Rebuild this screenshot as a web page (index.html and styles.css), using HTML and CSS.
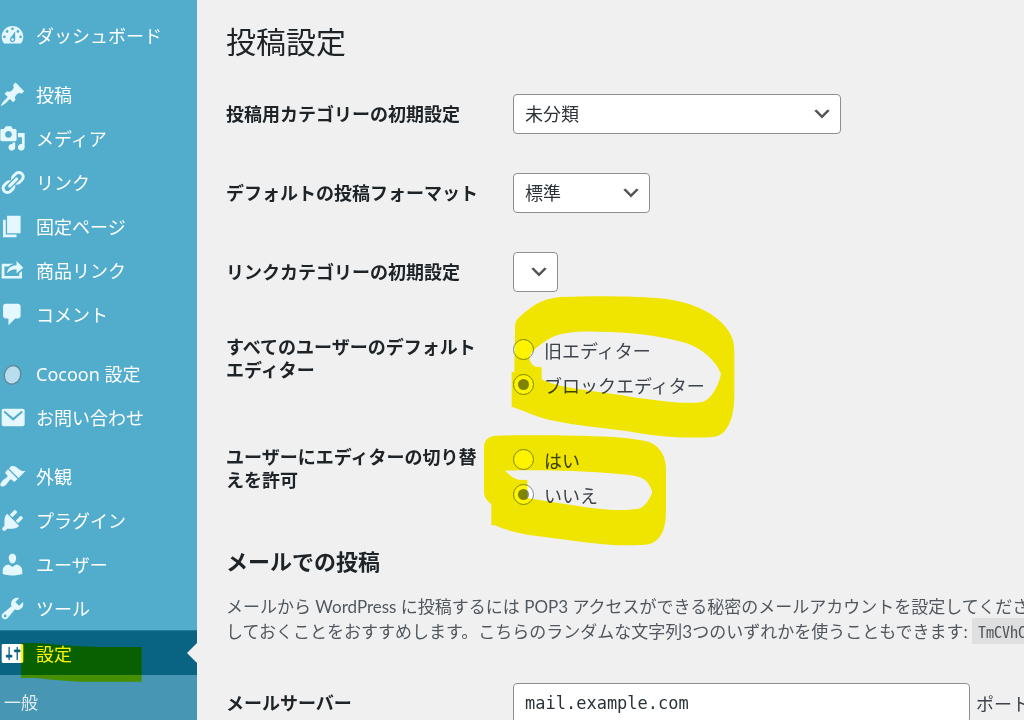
FILE: index.html
```html
<!DOCTYPE html>
<html lang="ja">

<head>
    <meta charset="utf-8">
    <title>投稿設定</title>
    <meta name="viewport" content="width=device-width, initial-scale=1">
    <link rel="stylesheet" href="styles.css">
</head>

<body>
    <nav class="sidebar">
        <ul class="menu">
            <li class="menu-item">
                <a href="#">
                    <svg class="icon" viewBox="0 0 20 20"><path d="M3.76 16h12.48c1.1-1.37 1.76-3.11 1.76-5 0-4.42-3.58-8-8-8s-8 3.58-8 8c0 1.89.66 3.63 1.76 5zM10 4c.55 0 1 .45 1 1s-.45 1-1 1-1-.45-1-1 .45-1 1-1zM6 6c.55 0 1 .45 1 1s-.45 1-1 1-1-.45-1-1 .45-1 1-1zm8 0c.55 0 1 .45 1 1s-.45 1-1 1-1-.45-1-1 .45-1 1-1zm-5.37 5.55L12 7v6c0 1.1-.9 2-2 2s-2-.9-2-2c0-.57.24-1.08.63-1.45zM4 10c.55 0 1 .45 1 1s-.45 1-1 1-1-.45-1-1 .45-1 1-1zm12 0c.55 0 1 .45 1 1s-.45 1-1 1-1-.45-1-1 .45-1 1-1zm-5 3c0-.55-.45-1-1-1s-1 .45-1 1 .45 1 1 1 1-.45 1-1z"/></svg>
                    ダッシュボード
                </a>
            </li>
            <li class="menu-item group-start">
                <a href="#">
                    <svg class="icon" viewBox="0 0 20 20"><path d="M10.44 3.02l1.82-1.82 6.36 6.35-1.83 1.82c-1.05-.68-2.48-.57-3.41.36l-.75.75c-.92.93-1.04 2.35-.35 3.41l-1.83 1.82-2.41-2.41-2.8 2.79c-.42.42-3.38 2.71-3.8 2.29s1.86-3.39 2.28-3.81l2.79-2.79L4.1 9.36l1.83-1.82c1.05.69 2.48.57 3.4-.36l.75-.75c.93-.92 1.05-2.35.36-3.41z"/></svg>
                    投稿
                </a>
            </li>
            <li class="menu-item">
                <a href="#">
                    <svg class="icon" viewBox="0 0 20 20"><path d="M13 11V4c0-.55-.45-1-1-1h-1.67L9 1H5L3.67 3H2c-.55 0-1 .45-1 1v7c0 .55.45 1 1 1h10c.55 0 1-.45 1-1zM7 4.5c1.38 0 2.5 1.12 2.5 2.5S8.38 9.5 7 9.5 4.5 8.38 4.5 7 5.62 4.5 7 4.5zM14 6h5v10.5c0 1.38-1.12 2.5-2.5 2.5S14 17.88 14 16.5s1.12-2.5 2.5-2.5c.17 0 .34.02.5.05V9h-3V6zm-4 8.05V13h2v3.5c0 1.38-1.12 2.5-2.5 2.5S7 17.88 7 16.5 8.12 14 9.5 14c.17 0 .34.02.5.05z"/></svg>
                    メディア
                </a>
            </li>
            <li class="menu-item">
                <a href="#">
                    <svg class="icon" viewBox="0 0 20 20"><path d="M17.74 2.76c1.68 1.69 1.68 4.41 0 6.1l-1.53 1.52c-1.12 1.12-2.7 1.47-4.14 1.09l2.62-2.61.76-.77.76-.76c.84-.84.84-2.2 0-3.04-.84-.85-2.2-.85-3.04 0l-.77.76-3.38 3.38c-.37-1.44-.02-3.02 1.1-4.14l1.52-1.53c1.69-1.68 4.42-1.68 6.1 0zM8.59 13.43l5.34-5.34c.42-.42.42-1.1 0-1.52-.44-.43-1.13-.39-1.53 0l-5.33 5.34c-.42.42-.42 1.1 0 1.52.44.43 1.13.39 1.52 0zm-.76 2.29l4.14-4.15c.38 1.44.03 3.02-1.09 4.14l-1.52 1.53c-1.69 1.68-4.41 1.68-6.1 0-1.68-1.68-1.68-4.42 0-6.1l1.53-1.52c1.12-1.12 2.7-1.47 4.14-1.1l-4.14 4.15c-.85.84-.85 2.2 0 3.05.84.84 2.2.84 3.04 0z"/></svg>
                    リンク
                </a>
            </li>
            <li class="menu-item">
                <a href="#">
                    <svg class="icon" viewBox="0 0 20 20"><path d="M6 15V2h10v13H6zm-1 1h8v2H3V5h2v11z"/></svg>
                    固定ページ
                </a>
            </li>
            <li class="menu-item">
                <a href="#">
                    <svg class="icon" viewBox="0 0 20 20"><path d="M18 8l-5 4V9.01c-2.58.06-4.88.45-7 2.99.29-3.57 2.66-5.66 7-5.94V3zM4 14h11v-2l2-1.6V16H2V5h9.43c-1.83.32-3.31 1-4.41 2H4v7z"/></svg>
                    商品リンク
                </a>
            </li>
            <li class="menu-item">
                <a href="#">
                    <svg class="icon" viewBox="0 0 20 20"><path d="M5 2h9c1.1 0 2 .9 2 2v7c0 1.1-.9 2-2 2h-2l-5 5v-5H5c-1.1 0-2-.9-2-2V4c0-1.1.9-2 2-2z"/></svg>
                    コメント
                </a>
            </li>
            <li class="menu-item group-start">
                <a href="#">
                    <svg class="icon" viewBox="0 0 20 20"><ellipse class="cocoon" cx="10" cy="11" rx="6" ry="7" transform="rotate(22 10 11)"/></svg>
                    Cocoon 設定
                </a>
            </li>
            <li class="menu-item">
                <a href="#">
                    <svg class="icon" viewBox="0 0 20 20"><path d="M3.5 3.5h14c.83 0 1.5.67 1.5 1.5v10c0 .83-.67 1.5-1.5 1.5h-14C2.67 16.5 2 15.83 2 15V5c0-.83.67-1.5 1.5-1.5zm.3 1.8c-.4.3-.4.7 0 1.1l6.7 6 6.7-6c.4-.4.4-.8 0-1.1-.3-.2-.6-.1-.9.1l-5.8 4.8-5.8-4.8c-.3-.2-.6-.3-.9-.1z"/></svg>
                    お問い合わせ
                </a>
            </li>
            <li class="menu-item group-start">
                <a href="#">
                    <svg class="icon" viewBox="0 0 20 20"><path d="M14.48 11.06L7.41 3.99l1.5-1.5c.5-.56 2.3-.47 3.51.32 1.21.8 1.43 1.28 2.91 2.1 1.18.64 2.45 1.26 4.45.85zm-.71.71L6.7 4.7 4.93 6.47c-.39.39-.39 1.02 0 1.41l1.06 1.06c.39.39.39 1.03 0 1.42-.6.6-1.43 1.11-2.21 1.69-.35.26-.7.53-1.01.84C1.43 14.23.4 16.08 1.4 17.07c.99 1 2.84-.03 4.18-1.36.31-.31.58-.66.85-1.02.57-.78 1.08-1.61 1.69-2.21.39-.39 1.02-.39 1.41 0l1.06 1.06c.39.39 1.02.39 1.41 0z"/></svg>
                    外観
                </a>
            </li>
            <li class="menu-item">
                <a href="#">
                    <svg class="icon" viewBox="0 0 20 20"><path d="M13.11 4.36L9.87 7.6 8 5.73l3.24-3.24c.35-.34 1.05-.2 1.56.32.52.51.66 1.21.31 1.55zm-8 1.77l.91-1.12 9.01 9.01-1.19.84c-.71.71-2.63 1.16-3.82 1.16H6.14L4.9 17.26c-.59.59-1.54.59-2.12 0-.59-.58-.59-1.53 0-2.12l1.24-1.24v-3.88c0-1.13.4-3.19 1.09-3.89zm7.26 3.97l3.24-3.24c.34-.35 1.04-.21 1.55.31.52.51.66 1.21.31 1.55l-3.24 3.25z"/></svg>
                    プラグイン
                </a>
            </li>
            <li class="menu-item">
                <a href="#">
                    <svg class="icon" viewBox="0 0 20 20"><path d="M10 9.25c-2.27 0-2.73-3.44-2.73-3.44C7 4.02 7.82 2 9.97 2c2.16 0 2.98 2.02 2.71 3.81 0 0-.41 3.44-2.68 3.44zm0 2.57L12.72 10c2.39 0 4.52 2.33 4.52 4.53v2.49s-3.65 1.13-7.24 1.13c-3.65 0-7.24-1.13-7.24-1.13v-2.49c0-2.25 1.94-4.48 4.47-4.48z"/></svg>
                    ユーザー
                </a>
            </li>
            <li class="menu-item">
                <a href="#">
                    <svg class="icon" viewBox="0 0 20 20"><path d="M16.68 9.77c-1.34 1.34-3.3 1.67-4.95.99l-5.41 6.52c-.99.99-2.59.99-3.58 0s-.99-2.59 0-3.57l6.52-5.42c-.68-1.65-.35-3.61.99-4.95 1.28-1.28 3.12-1.62 4.72-1.06l-2.89 2.89 2.82 2.82 2.86-2.87c.53 1.58.18 3.39-1.08 4.65zM3.81 16.21c.4.39 1.04.39 1.43 0 .4-.4.4-1.04 0-1.43-.39-.4-1.03-.4-1.43 0-.39.39-.39 1.03 0 1.43z"/></svg>
                    ツール
                </a>
            </li>
            <li class="menu-item current">
                <a href="#">
                    <svg class="icon" viewBox="0 0 20 20"><path d="M18 16V4c0-.55-.45-1-1-1H3c-.55 0-1 .45-1 1v12c0 .55.45 1 1 1h14c.55 0 1-.45 1-1zM8 11h1c.55 0 1 .45 1 1s-.45 1-1 1H8v1.5c0 .28-.22.5-.5.5s-.5-.22-.5-.5V13H6c-.55 0-1-.45-1-1s.45-1 1-1h1V5.5c0-.28.22-.5.5-.5s.5.22.5.5V11zm5-2h-1c-.55 0-1-.45-1-1s.45-1 1-1h1V5.5c0-.28.22-.5.5-.5s.5.22.5.5V7h1c.55 0 1 .45 1 1s-.45 1-1 1h-1v5.5c0 .28-.22.5-.5.5s-.5-.22-.5-.5V9z"/></svg>
                    設定
                </a>
                <svg class="marker marker-menu" viewBox="0 0 363 120"><path d="M0 4C57 0 107 9 167 12L237 15H362V119H177C117 117 67 109 37 108H0Z"/></svg>
            </li>
        </ul>
        <ul class="submenu">
            <li><a href="#">一般</a></li>
        </ul>
    </nav>

    <main class="content">
        <h1>投稿設定</h1>
        <form>
            <div class="form-row">
                <label class="form-label" for="category">投稿用カテゴリーの初期設定</label>
                <select class="select select-wide" id="category">
                    <option>未分類</option>
                </select>
            </div>
            <div class="form-row">
                <label class="form-label" for="format">デフォルトの投稿フォーマット</label>
                <select class="select select-medium" id="format">
                    <option>標準</option>
                </select>
            </div>
            <div class="form-row">
                <label class="form-label" for="link-category">リンクカテゴリーの初期設定</label>
                <select class="select select-empty" id="link-category"></select>
            </div>
            <div class="form-row form-row-options" role="radiogroup" aria-labelledby="editor-label">
                <div class="form-label" id="editor-label">すべてのユーザーのデフォルトエディター</div>
                <div class="options">
                    <label class="option"><input type="radio" name="editor">旧エディター</label>
                    <label class="option"><input type="radio" name="editor" checked>ブロックエディター</label>
                    <svg class="marker marker-editor" viewBox="0 0 810 450"><path d="M105 115C105 95 110 88 125 75C165 40 195 25 240 21C350 17 480 18 560 27C650 40 710 75 740 115C755 135 763 155 763 185V310C763 360 755 395 740 415C730 430 720 440 690 442C620 445 540 440 470 428C390 415 290 408 210 390C170 380 130 362 95 350V246H103ZM148 205C150 185 185 160 210 145C240 128 290 124 350 125C450 125 550 138 620 160C670 178 710 215 723 252C715 290 695 325 670 335C620 345 540 332 450 320C350 302 250 298 190 270L185 268V232L165 230C155 225 150 215 148 205Z"/></svg>
                </div>
            </div>
            <div class="form-row form-row-options" role="radiogroup" aria-labelledby="switch-label">
                <div class="form-label" id="switch-label">ユーザーにエディターの切り替えを許可</div>
                <div class="options">
                    <label class="option"><input type="radio" name="switch">はい</label>
                    <label class="option"><input type="radio" name="switch" checked>いいえ</label>
                    <svg class="marker marker-switch" viewBox="0 0 630 390"><path d="M42 50C43 30 55 18 80 17C180 14 330 16 420 20C470 24 515 28 540 37C572 52 588 80 588 120V240C588 290 578 325 545 340C530 346 500 347 430 345C350 340 280 328 200 318C150 312 110 302 75 286H64V222C50 212 42 200 42 185ZM105 122C200 119 330 122 420 130C470 134 505 135 525 150C535 158 543 172 547 186C540 205 530 225 510 235C480 243 420 241 370 235C300 225 240 215 172 204V150L145 149C132 146 118 135 105 122Z"/></svg>
                </div>
            </div>

            <h2>メールでの投稿</h2>
            <p class="description">
                メールから WordPress に投稿するには POP3 アクセスができる秘密のメールアカウントを設定してください。<br>
                しておくことをおすすめします。こちらのランダムな文字列3つのいずれかを使うこともできます: <code>TmCVhC</code>
            </p>

            <div class="form-row">
                <label class="form-label" for="server">メールサーバー</label>
                <div class="server">
                    <input class="text-input" type="text" id="server" value="mail.example.com">
                    <label for="port">ポート</label>
                    <input class="text-input port" type="text" id="port">
                </div>
            </div>
        </form>
    </main>
</body>

</html>
```
FILE: styles.css
```css
* {
    box-sizing: border-box;
}

body {
    display: flex;
    height: 100vh;
    margin: 0;
    overflow: hidden;
    background-color: #f0f0f0;
    color: #3c434a;
    font-family: "Noto Sans", "Noto Sans CJK JP", sans-serif;
    font-size: 18px;
}

/* sidebar */
.sidebar {
    flex: none;
    width: 197px;
    padding-top: 13px;
    background-color: #52accc;
}

.menu, .submenu {
    margin: 0;
    padding: 0;
    list-style: none;
}

.menu-item a {
    display: flex;
    align-items: center;
    gap: 10px;
    height: 44px;
    color: #fff;
    text-decoration: none;
    white-space: nowrap;
}

.group-start {
    margin-top: 15px;
}

.icon {
    flex: none;
    width: 27px;
    height: 27px;
    margin-left: -1px;
    fill: #e5f8ff;
    fill-rule: evenodd;
}

.cocoon {
    fill: #b9ddec;
    stroke: #5c8796;
}

.current {
    position: relative;
    border-top: 1px solid #247a98;
    background-color: #096484;
}

.current .icon {
    fill: #fff;
}

.current::after {
    content: "";
    position: absolute;
    top: 12px;
    right: 0;
    border: 10px solid transparent;
    border-left: 0;
    border-right-color: #f0f0f0;
}

.submenu {
    height: 100%;
    padding: 15px 4px;
    background-color: #4796b3;
}

.submenu a {
    color: #e2ecf1;
    font-size: 17px;
    line-height: 26px;
    text-decoration: none;
}

/* settings form */
.content {
    flex: 1;
    min-width: 0;
    padding: 22px 0 0 29px;
}

h1 {
    margin: 0 0 13px;
    color: #1d2327;
    font-size: 30px;
    font-weight: 400;
    line-height: 40px;
}

h2 {
    margin: 14px 0 18px;
    color: #1d2327;
    font-size: 22px;
    line-height: 30px;
}

.form-row {
    display: grid;
    grid-template-columns: 264px 1fr;
    column-gap: 23px;
    align-items: start;
    padding: 19px 0 20px;
}

.form-label {
    padding-top: 9px;
    color: #1d2327;
    font-weight: 700;
    line-height: 23px;
}

.form-row-options .form-label {
    padding-top: 5px;
}

.select, .text-input {
    height: 40px;
    padding: 0 11px;
    border: 1px solid #8c8f94;
    border-radius: 4px;
    background-color: #fff;
    color: #2c3338;
    font-family: inherit;
    font-size: 18px;
}

.select {
    appearance: none;
    background-image: url("data:image/svg+xml,%3Csvg xmlns='http://www.w3.org/2000/svg' viewBox='0 0 20 20'%3E%3Cpath d='M5 6l5 5 5-5 2 1-7 7-7-7 2-1z' fill='%23555'/%3E%3C/svg%3E");
    background-repeat: no-repeat;
    background-position: right 7px center;
    background-size: 22px;
}

.select-wide {
    width: 328px;
}

.select-medium {
    width: 137px;
}

.select-empty {
    width: 45px;
}

.options {
    position: relative;
    padding-top: 1px;
}

.option {
    display: flex;
    align-items: center;
    gap: 10px;
    height: 35px;
}

.option input {
    appearance: none;
    display: grid;
    place-items: center;
    width: 21px;
    height: 21px;
    margin: 0;
    border: 1px solid #7e8993;
    border-radius: 50%;
    background-color: #fff;
}

.option input:checked::before {
    content: "";
    width: 11px;
    height: 11px;
    border-radius: 50%;
    background-color: #7e8993;
}

.description {
    margin: 0 0 20px;
    color: #50575e;
    font-family: Lato, "Noto Sans CJK JP", sans-serif;
    font-size: 17px;
    line-height: 25px;
    white-space: nowrap;
}

.description code {
    padding: 1px 6px;
    background-color: #dfdfe0;
    font-family: "Noto Sans Mono CJK JP", "Liberation Mono", monospace;
    font-size: 16px;
}

.server {
    display: flex;
    align-items: center;
    gap: 6px;
    white-space: nowrap;
}

.text-input {
    flex: none;
    width: 457px;
    font-family: "DejaVu Sans Mono", monospace;
    font-size: 17px;
}

.port {
    width: 80px;
}

/* yellow highlighter strokes */
.marker {
    position: absolute;
    fill: #fff400;
    fill-rule: evenodd;
    mix-blend-mode: multiply;
    pointer-events: none;
}

.marker-menu {
    top: 11px;
    left: 21px;
    width: 121px;
    height: 40px;
}

.marker-editor {
    top: -41px;
    left: -33px;
    width: 270px;
    height: 150px;
}

.marker-switch {
    top: -11px;
    left: -43px;
    width: 210px;
    height: 130px;
}
```
